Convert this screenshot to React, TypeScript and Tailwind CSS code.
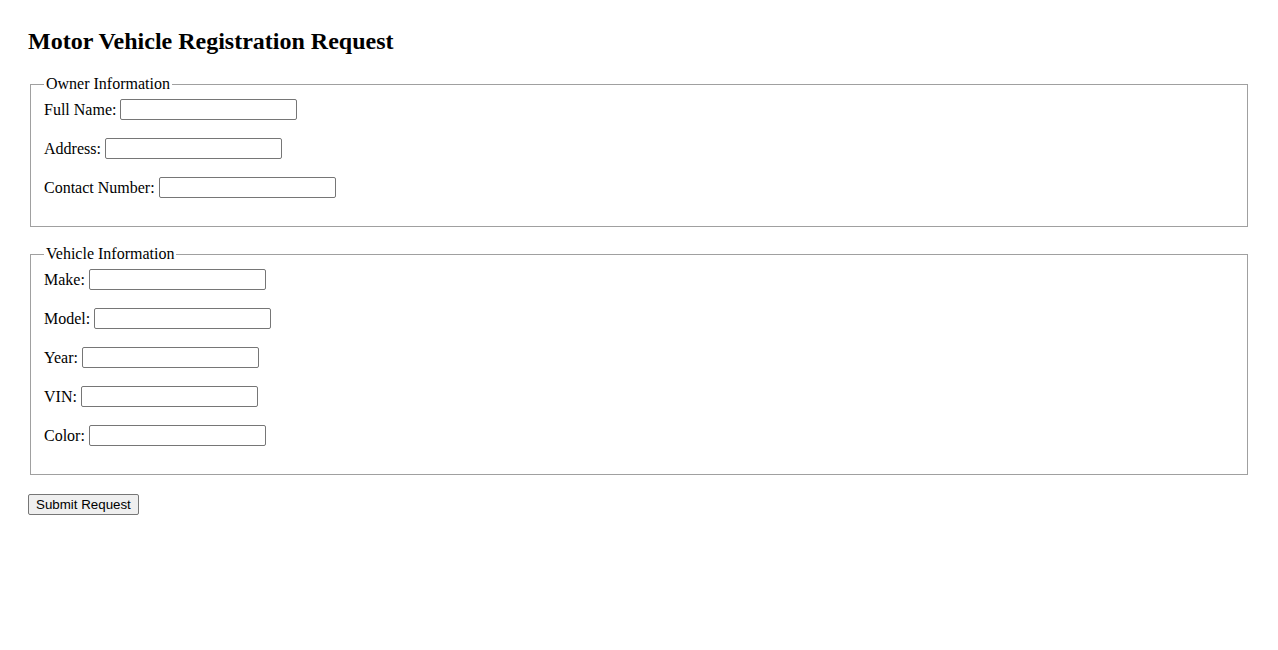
const OWNER_FIELDS = ["Full Name:", "Address:", "Contact Number:"];
const VEHICLE_FIELDS = ["Make:", "Model:", "Year:", "VIN:", "Color:"];

const Field = ({ label }: { label: string }) => (
  <div className="flex items-center h-[23px] mb-4">
    <label className="text-[16px] text-black">{label}</label>
    <input
      type="text"
      className="ml-[4px] w-[177px] h-[21px] px-[2px] py-[1px] border border-[#767676] rounded-[2px] bg-white text-[13.33px] font-['Liberation_Sans',Arial,sans-serif] outline-none"
    />
  </div>
);

const Group = ({ title, fields }: { title: string; fields: string[] }) => (
  <fieldset className="mx-[2px] px-[13px] pt-[5px] pb-[11px] border border-[#a0a0a0] min-w-0">
    <legend className="px-[2px] text-[16px] text-black">{title}</legend>
    {fields.map(f => (
      <Field key={f} label={f} />
    ))}
  </fieldset>
);

export default function App() {
  return (
    <div className="min-h-[650px] bg-white px-[28px] pt-[28px] font-['Liberation_Serif','Times_New_Roman',serif] leading-[normal] text-black">
      <h2 className="text-[24px] font-bold mb-[20px]">Motor Vehicle Registration Request</h2>
      <form onSubmit={e => e.preventDefault()}>
        <div className="mb-[18px]">
          <Group title="Owner Information" fields={OWNER_FIELDS} />
        </div>
        <Group title="Vehicle Information" fields={VEHICLE_FIELDS} />
        <button
          type="submit"
          className="mt-[19px] h-[21px] px-[7px] border border-[#767676] rounded-[2px] bg-[#efefef] text-[13.33px] font-['Liberation_Sans',Arial,sans-serif] text-black leading-none"
        >
          Submit Request
        </button>
      </form>
    </div>
  );
}
